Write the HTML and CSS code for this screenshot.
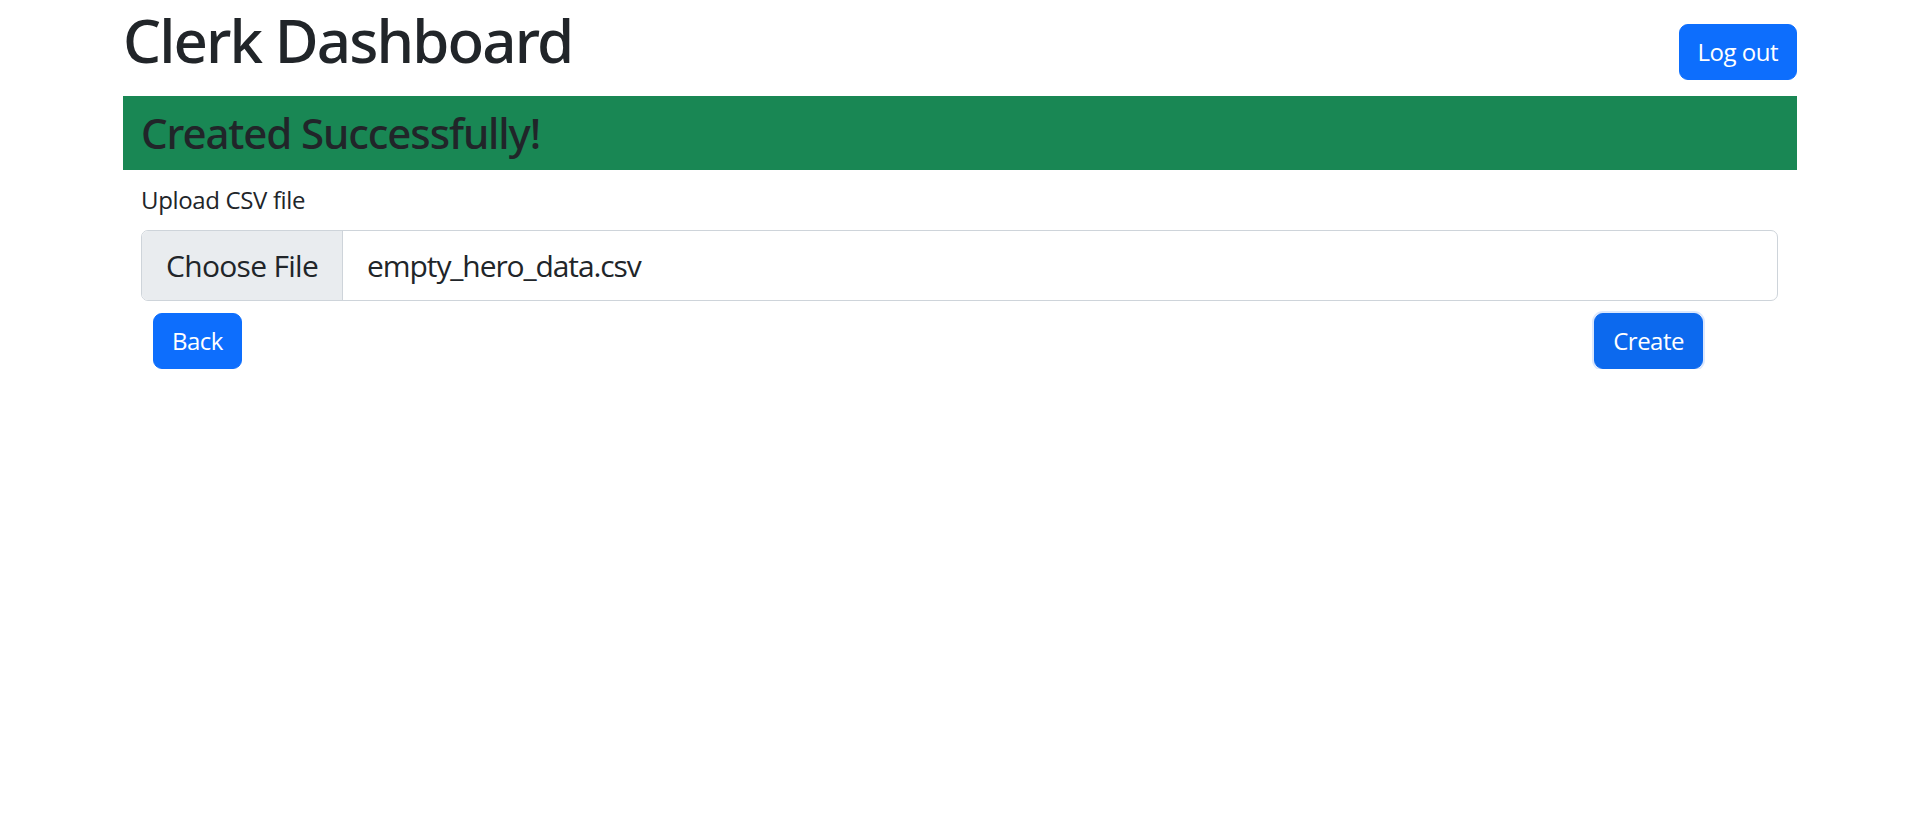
FILE: index.html
```html
<!DOCTYPE html>
<html lang="en">
<head>
<meta charset="utf-8">
<title>Clerk Dashboard</title>
<link rel="stylesheet" href="styles.css">
</head>
<body>
<div class="container">
  <header class="header">
    <h1 class="title">Clerk Dashboard</h1>
    <button class="btn btn-primary logout">Log out</button>
  </header>
  <div class="alert-success">
    <h3 class="alert-heading">Created Successfully!</h3>
  </div>
  <form class="upload-form">
    <label class="form-label">Upload CSV file</label>
    <div class="file-input">
      <span class="file-btn">Choose File</span>
      <span class="file-name">empty_hero_data.csv</span>
    </div>
    <div class="actions">
      <button type="button" class="btn btn-primary">Back</button>
      <button type="button" class="btn btn-primary btn-focus">Create</button>
    </div>
  </form>
</div>
</body>
</html>
```
FILE: styles.css
```css
html, body {
  margin: 0;
  padding: 0;
  background: #fff;
}
body {
  font-family: "Open Sans", "Noto Sans", sans-serif;
  color: #212529;
}
.container {
  width: 1674px;
  margin: 0 auto;
}
.header {
  display: flex;
  justify-content: space-between;
  align-items: flex-start;
  height: 80px;
  margin-bottom: 16px;
}
.title {
  margin: 0;
  padding-top: 4px;
  font-family: "Noto Sans", "Open Sans", sans-serif;
  font-size: 60px;
  line-height: 72px;
  font-weight: 500;
  letter-spacing: -1.9px;
}
.btn {
  font-family: inherit;
  font-size: 24px;
  line-height: 36px;
  padding: 9px 18px;
  border: 1px solid #0d6efd;
  border-radius: 9px;
  background: #0d6efd;
  color: #fff;
  cursor: pointer;
  white-space: nowrap;
  letter-spacing: -0.5px;
}
.logout {
  margin-top: 24px;
}
.btn-focus {
  background: #0c69ee;
  border-color: #0c69ee;
  box-shadow: 0 0 0 2px #dbe7fd;
}
.alert-success {
  background: #198754;
  padding: 12px 18px;
}
.alert-heading {
  margin: 0;
  font-family: "Noto Sans", "Open Sans", sans-serif;
  font-size: 42px;
  line-height: 50px;
  font-weight: 500;
  letter-spacing: -1.1px;
  color: #212529;
}
.upload-form {
  padding: 0 19px 0 18px;
}
.form-label {
  display: block;
  font-size: 24px;
  line-height: 36px;
  margin: 12px 0;
  letter-spacing: -0.35px;
}
.file-input {
  display: flex;
  border: 1px solid #ced4da;
  border-radius: 7px;
  overflow: hidden;
  font-size: 30px;
  line-height: 45px;
}
.file-btn {
  background: #e9ecef;
  padding: 12px 24px;
  border-right: 1px solid #ced4da;
  letter-spacing: -0.7px;
}
.file-name {
  padding: 12px 24px;
  letter-spacing: -1.1px;
}
.actions {
  display: flex;
  justify-content: space-between;
  margin-top: 12px;
  padding: 0 75px 0 12px;
}
```
